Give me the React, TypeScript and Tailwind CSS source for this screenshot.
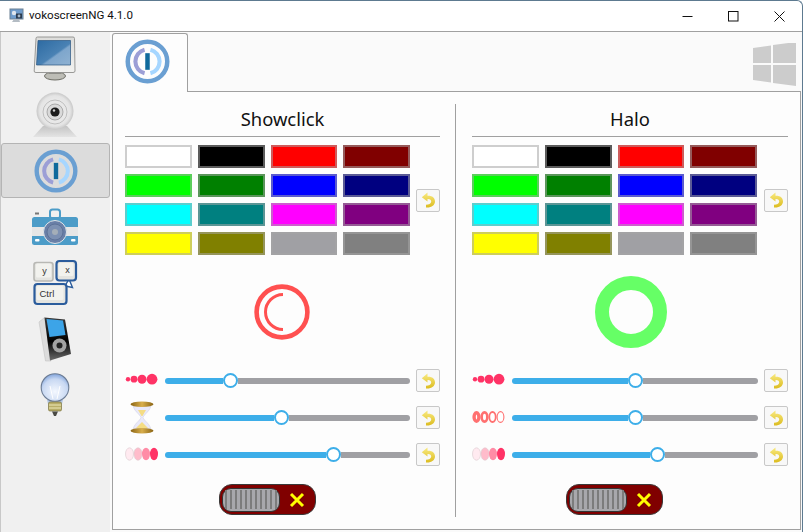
const FONT = "font-['Noto_Sans','Open_Sans',sans-serif]";

const swatches = [
  "bg-[#ffffff]", "bg-[#000000]", "bg-[#ff0000]", "bg-[#800000]",
  "bg-[#00ff00]", "bg-[#008000]", "bg-[#0000ff]", "bg-[#000080]",
  "bg-[#00ffff]", "bg-[#008080]", "bg-[#ff00ff]", "bg-[#800080]",
  "bg-[#ffff00]", "bg-[#808000]", "bg-[#a0a0a4]", "bg-[#808080]",
];

function Logo({ size }: { size: number }) {
  return (
    <svg width={size} height={size} viewBox="0 0 46 46">
      <circle cx="23" cy="23" r="20.2" fill="none" stroke="#6a9fd2" strokeWidth="4.6" />
      <path d="M20 10.9 A12.5 12.5 0 0 0 20 35.1" fill="none" stroke="#9c9fd6" strokeWidth="4.2" />
      <path d="M26 10.9 A12.5 12.5 0 0 1 26 35.1" fill="none" stroke="#a6d6ff" strokeWidth="4.2" />
      <rect x="20.7" y="14.5" width="4.6" height="17" fill="#0f6a9c" />
    </svg>
  );
}

function SideIcon({ i }: { i: number }) {
  return (
    <svg width="108" height="55" viewBox="1 0 108 55">
      <defs>
        <linearGradient id={`scr${i}`} x1="0" y1="0" x2="1" y2="1">
          <stop offset="0" stopColor="#2c6aa2" />
          <stop offset="0.55" stopColor="#4a82b4" />
          <stop offset="0.6" stopColor="#7ea6cc" />
          <stop offset="1" stopColor="#8fb2d2" />
        </linearGradient>
        <linearGradient id={`bez${i}`} x1="0" y1="0" x2="0" y2="1">
          <stop offset="0" stopColor="#dcdcda" />
          <stop offset="1" stopColor="#f2f2f0" />
        </linearGradient>
        <radialGradient id={`sph${i}`} cx="0.5" cy="0.5" r="0.55">
          <stop offset="0" stopColor="#f6f6f6" />
          <stop offset="0.75" stopColor="#e4e4e4" />
          <stop offset="1" stopColor="#b8b8b8" />
        </radialGradient>
        <linearGradient id={`base${i}`} x1="0" y1="0" x2="0" y2="1">
          <stop offset="0" stopColor="#c4c4c4" />
          <stop offset="1" stopColor="#e4e4e4" />
        </linearGradient>
        <linearGradient id={`pl${i}`} x1="0" y1="0" x2="0" y2="1">
          <stop offset="0" stopColor="#3a3a3a" />
          <stop offset="0.55" stopColor="#000" />
          <stop offset="1" stopColor="#6a6a6a" />
        </linearGradient>
        <radialGradient id={`bl${i}`} cx="0.5" cy="0.65" r="0.65">
          <stop offset="0" stopColor="#f4f8ff" />
          <stop offset="0.7" stopColor="#c8d8f2" />
          <stop offset="1" stopColor="#7fa2da" />
        </radialGradient>
      </defs>
      {i === 0 && (
        <g>
          <ellipse cx="55" cy="43" rx="10.5" ry="4" fill="#bdbdb6" stroke="#6c6c64" />
          <rect x="49" y="37" width="12" height="4" fill="#8d8d88" />
          <path d="M37.5 4 L73 4 Q74.5 4 74.5 5.5 L75 38 Q75 39.5 73 39.5 L36 39.5 Q34 39.5 34.2 38 L36 5.5 Q36 4 37.5 4 Z" fill={`url(#bez${i})`} stroke="#8e8e8c" strokeWidth="0.9" />
          <path d="M38 7.5 L70.5 7.5 L70.5 32 L36.5 32 Z" fill={`url(#scr${i})`} stroke="#2a5580" strokeWidth="0.7" />
        </g>
      )}
      {i === 1 && (
        <g>
          <path d="M43 38 L67 38 L77 49 L33 49 Z" fill={`url(#base${i})`} />
          <circle cx="55" cy="23" r="18.5" fill={`url(#sph${i})`} />
          <circle cx="55" cy="24" r="12" fill="#e8e8e8" stroke="#b4b4b4" strokeWidth="0.8" />
          <circle cx="55" cy="24" r="8" fill="#dadada" stroke="#9c9c9c" strokeWidth="0.8" />
          <circle cx="55" cy="24" r="4.6" fill="#1c1c1c" />
          <circle cx="54" cy="22.5" r="1.2" fill="#cfcfcf" />
        </g>
      )}
      {i === 3 && (
        <g>
          <rect x="50" y="11.5" width="10" height="9" rx="2.5" fill="none" stroke="#4c9cc8" strokeWidth="2" />
          <rect x="32" y="19" width="46" height="28" rx="2.5" fill="#4c9cc8" />
          <rect x="32" y="29" width="46" height="9" fill="#e6e6e6" />
          <rect x="35" y="14.5" width="4" height="2" fill="#777" />
          <circle cx="55" cy="34" r="11.5" fill="#6a80a8" stroke="#dfe6ea" strokeWidth="1" />
          <circle cx="55" cy="34" r="8" fill="#7c90b2" stroke="#5d7298" />
          <circle cx="55" cy="34" r="3" fill="#a4aeb8" />
          <rect x="35" y="41" width="4.5" height="2.4" rx="1" fill="#fff" />
          <rect x="71" y="41" width="4.5" height="2.4" rx="1" fill="#fff" />
        </g>
      )}
      {i === 4 && (
        <g fontFamily="Liberation Sans, sans-serif" fontSize="9" fill="#333">
          <rect x="34" y="9.5" width="19" height="18.5" rx="2.5" fill="#e4e4e0" stroke="#b8b8b4" strokeWidth="1.6" />
          <rect x="36" y="10.5" width="15" height="14" rx="1.5" fill="#f2f2ee" />
          <text x="44.5" y="21" textAnchor="middle">y</text>
          <path d="M69 26 L72.5 34.5 L65 33 Z" fill="#fff" stroke="#2b5c9c" strokeWidth="1.4" />
          <rect x="56.5" y="8" width="19.5" height="19.5" rx="3" fill="#e4e4e0" stroke="#2b5c9c" strokeWidth="2.2" />
          <rect x="58.5" y="10" width="15" height="13" rx="1.5" fill="#f2f2ee" />
          <text x="67.5" y="20" textAnchor="middle">x</text>
          <rect x="34.5" y="31" width="32" height="20" rx="3" fill="#e4e4e0" stroke="#2b5c9c" strokeWidth="2.2" />
          <rect x="36.5" y="33" width="27" height="14" rx="1.5" fill="#f2f2ee" />
          <text x="39.5" y="44" fontSize="9.5">Ctrl</text>
        </g>
      )}
      {i === 5 && (
        <g>
          <path d="M39 14 L44.5 9.5 L51 53 L45.5 53 Z" fill="#dcdcdc" stroke="#bdbdbd" strokeWidth="0.5" />
          <path d="M44.5 9.5 L65 11.5 L71 46 L50 52.5 Z" fill={`url(#pl${i})`} />
          <path d="M46.5 11 L63 12.5 L65.5 27 L49.5 29 Z" fill="#3ca4e8" />
          <circle cx="59.5" cy="37.5" r="7" fill="#a2a2a2" />
          <circle cx="59.5" cy="37.5" r="3" fill="#222" />
        </g>
      )}
      {i === 6 && (
        <g>
          <path d="M47 37 L63 37 L62 41 L48 41 Z" fill="#b4c8e4" />
          <circle cx="55" cy="24.5" r="13.8" fill={`url(#bl${i})`} stroke="#6c7c94" strokeWidth="1.1" />
          <path d="M50 23 L53 36 M60 23 L57 36" stroke="#fff" strokeWidth="1" fill="none" />
          <rect x="48.5" y="39" width="13" height="9" rx="1.5" fill="#b8ae68" stroke="#7c7440" strokeWidth="0.7" />
          <path d="M49 42 L61 42 M49 45 L61 45" stroke="#efe9b8" strokeWidth="1" />
          <path d="M52 48.5 L58 48.5 L56 53 L54 53 Z" fill="#4a4a44" />
        </g>
      )}
    </svg>
  );
}

function ResetButton() {
  return (
    <button className="w-6 h-[23px] shrink-0 flex items-center justify-center border border-[#c8c8c8] rounded-[2px] bg-[#f8f8f8]">
      <svg width="15" height="16" viewBox="0 0 15 16">
        <defs>
          <linearGradient id="undo" x1="0" y1="0" x2="0" y2="1">
            <stop offset="0" stopColor="#f9ea80" />
            <stop offset="1" stopColor="#dcbc20" />
          </linearGradient>
        </defs>
        <path
          d="M6.5 0.5 L0.8 5.2 L6.5 9.5 L6.5 7 C9 6.8 10.4 8 10.2 9.8 C10 11.8 7.8 12.8 5 12.8 L5 15.4 C10.4 15.8 14 13 14 9.4 C14 5.6 10.6 3.4 6.5 3.8 Z"
          fill="url(#undo)"
        />
      </svg>
    </button>
  );
}

function Slider({ fill, icon }: { fill: string; icon: React.ReactNode }) {
  return (
    <div className="flex items-center h-[25px]">
      <div className="w-[33px] h-[25px] shrink-0 flex items-center justify-center">{icon}</div>
      <div className="flex-1 flex items-center ml-[7px] mr-[6px]">
        <div className={`${fill} h-1.5 rounded-l-[3px] bg-[#3daee9]`} />
        <div className="size-[15px] shrink-0 rounded-full bg-white border-2 border-[#3daee9]" />
        <div className="flex-1 h-1.5 rounded-r-[3px] bg-[#a0a0a4]" />
      </div>
      <ResetButton />
    </div>
  );
}

const SizeDots = () => (
  <svg width="33" height="25" viewBox="0 0 33 25" fill="#ff3366">
    <circle cx="3" cy="11.2" r="2.2" />
    <circle cx="9" cy="11.2" r="3.4" />
    <circle cx="17" cy="11.2" r="4.5" />
    <circle cx="27" cy="11.2" r="5.4" />
  </svg>
);

const OpacityDots = () => (
  <svg width="33" height="25" viewBox="0 0 33 25">
    <ellipse cx="4.5" cy="12" rx="4" ry="6.2" fill="#ffeaf0" stroke="#e0d0d4" strokeWidth="0.7" />
    <ellipse cx="13" cy="12" rx="4" ry="6.2" fill="#ffbccb" stroke="#e0c8ce" strokeWidth="0.7" />
    <ellipse cx="21" cy="12" rx="4" ry="6.2" fill="#ff8ca6" />
    <ellipse cx="29" cy="12" rx="4" ry="6.2" fill="#ff3366" />
  </svg>
);

const RingDots = () => (
  <svg width="33" height="25" viewBox="0 0 33 25" fill="#fff" stroke="#ff7070">
    <ellipse cx="4.5" cy="12" rx="2.4" ry="4.2" strokeWidth="3.4" />
    <ellipse cx="12.5" cy="12" rx="2.8" ry="4.6" strokeWidth="2.6" />
    <ellipse cx="20.5" cy="12" rx="3.2" ry="5" strokeWidth="1.8" />
    <ellipse cx="28.5" cy="12" rx="3.4" ry="5.4" strokeWidth="1.1" />
  </svg>
);

const Hourglass = () => (
  <svg width="24" height="33" viewBox="0 0 24 33" className="shrink-0">
    <defs>
      <linearGradient id="cap" x1="0" y1="0" x2="1" y2="0">
        <stop offset="0" stopColor="#8a6414" />
        <stop offset="0.5" stopColor="#d8ae4c" />
        <stop offset="1" stopColor="#8a6414" />
      </linearGradient>
    </defs>
    <path d="M3 3 L21 3 C21 10 14 13 13 16.5 C14 20 21 23 21 30 L3 30 C3 23 10 20 11 16.5 C10 13 3 10 3 3 Z" fill="#e9e9fa" stroke="#c8c8dc" strokeWidth="0.5" />
    <path d="M8 9 L16 9 L12.5 15 L11.5 15 Z" fill="#f4dc84" />
    <path d="M12 21 L18 27 L6 27 Z" fill="#f4dc84" />
    <ellipse cx="12" cy="3.2" rx="11.5" ry="2.8" fill="url(#cap)" />
    <ellipse cx="12" cy="29.8" rx="11.5" ry="2.8" fill="url(#cap)" />
  </svg>
);

function Toggle() {
  return (
    <div className="w-[97px] h-[31px] rounded-[13px] bg-[#800000] border border-[#3a3a3a] flex items-center pl-[2px]">
      <div className="w-[58px] h-[24px] rounded-[9px] bg-[#a8a8ac] border border-[#333] flex items-center justify-center gap-[2.5px] shrink-0">
        {[0, 1, 2, 3, 4, 5, 6, 7, 8, 9, 10].map((k) => (
          <div key={k} className="w-[2.5px] h-[19px] bg-[#7c7c7c]" />
        ))}
      </div>
      <svg width="16" height="16" viewBox="0 0 16 16" className="ml-[9px]">
        <path d="M2 2 L14 14 M14 2 L2 14" stroke="#ffff00" strokeWidth="3" />
      </svg>
    </div>
  );
}

function Panel({
  title,
  circle,
  sliders,
  className,
  toggleClass,
}: {
  title: string;
  circle: React.ReactNode;
  sliders: React.ReactNode;
  className: string;
  toggleClass: string;
}) {
  return (
    <div className={`${className} flex flex-col`}>
      <div className="h-[45px] border-b border-[#a0a0a0] flex items-center justify-center pt-[9px] text-[18.4px] text-[#111]">
        {title}
      </div>
      <div className="flex items-center mt-2">
        <div className="grid grid-cols-[67px_67px_66px_67px] auto-rows-[23px] gap-x-[6px] gap-y-[6px]">
          {swatches.map((s) => (
            <div key={s} className={`${s} border-2 border-[#a5a5a58c]`} />
          ))}
        </div>
        <div className="ml-auto">
          <ResetButton />
        </div>
      </div>
      <div className="h-[113px] flex items-center justify-center">{circle}</div>
      <div className="flex flex-col gap-3">{sliders}</div>
      <div className={`mt-[17px] ${toggleClass}`}>
        <Toggle />
      </div>
    </div>
  );
}

export default function App() {
  return (
    <div className={`${FONT} w-[803px] h-[532px] flex flex-col bg-white overflow-hidden border-t border-r border-[#5d7a90] rounded-tr-md`}>
      <div className="h-[30px] flex items-center shrink-0 pl-[9px]">
        <svg width="15" height="16" viewBox="0 0 15 16" className="shrink-0">
          <rect x="1" y="1" width="13" height="10" fill="#6f9ccc" stroke="#6a8094" />
          <circle cx="5" cy="5" r="2.2" fill="#dfe6ee" />
          <rect x="7" y="5.5" width="6" height="5" fill="#2c3c50" />
          <circle cx="10" cy="8" r="1.4" fill="#a8b8c8" />
          <path d="M5 11 L10 11 L11 14 L3 14 Z" fill="#b4bcc4" />
        </svg>
        <span className="ml-[5px] text-[11.6px] text-[#111] font-['Roboto',sans-serif]">vokoscreenNG 4.1.0</span>
        <div className="ml-auto flex">
          <div className="w-[46px] h-[30px] flex items-center justify-center">
            <svg width="11" height="11" viewBox="0 0 11 11"><path d="M0.5 5.5 H10.5" stroke="#111" /></svg>
          </div>
          <div className="w-[46px] h-[30px] flex items-center justify-center">
            <svg width="11" height="11" viewBox="0 0 11 11"><rect x="0.5" y="0.5" width="9.5" height="9.5" fill="none" stroke="#111" /></svg>
          </div>
          <div className="w-[46px] h-[30px] flex items-center justify-center">
            <svg width="11" height="11" viewBox="0 0 11 11"><path d="M0.5 0.5 L10.5 10.5 M10.5 0.5 L0.5 10.5" stroke="#111" /></svg>
          </div>
        </div>
      </div>
      <div className="flex-1 flex border-t border-[#a0a0a0] min-h-0">
        <div className="w-[110px] shrink-0 bg-[#f0f0f0] border-l border-[#c8c8c8] pt-px flex flex-col">
          {[0, 1, 2, 3, 4, 5, 6].map((i) =>
            i === 2 ? (
              <div key={i} className="h-[55px] w-[109px] bg-[#dcdcdc] border border-[#b4b4b4] rounded-[3px] flex items-center justify-center">
                <Logo size={44} />
              </div>
            ) : (
              <div key={i} className="h-[55px] w-[109px]">
                <SideIcon i={i} />
              </div>
            ),
          )}
        </div>
        <div className="flex-1 bg-[#fafafa] pl-[2px] pt-px pr-[1px] pb-[2px] flex flex-col min-w-0">
          <div className="flex h-[59px] shrink-0">
            <div className="w-[76px] bg-[#fdfdfd] border-x border-t border-[#a0a0a0] rounded-t-[3px] pt-[5px] pl-[12px]">
              <Logo size={45} />
            </div>
            <div className="flex-1 border-b border-[#a0a0a0] flex justify-end pr-[4px] pt-[10px]">
              <svg width="44" height="44" viewBox="0 0 44 44" fill="#cccccc">
                <path d="M0 5 L18 2.5 V20 H0 Z" />
                <path d="M20 2 L43 -1 V20 H20 Z" />
                <path d="M0 22 H18 V39.5 L0 37 Z" />
                <path d="M20 22 H43 V43 L20 40 Z" />
              </svg>
            </div>
          </div>
          <div className="flex-1 flex bg-[#fdfdfd] border-x border-b border-[#a0a0a0] min-h-0">
            <Panel
              title="Showclick"
              className="w-[342px] pl-3 pr-[15px]"
              toggleClass="ml-[94px]"
              circle={
                <svg width="56" height="56" viewBox="0 0 56 56" className="-translate-x-px">
                  <circle cx="28" cy="28" r="25.4" fill="none" stroke="#ff5050" strokeWidth="4.6" />
                  <path d="M29 10.5 A17.5 17.5 0 0 0 29 45.5" fill="none" stroke="#ff5050" strokeWidth="3" />
                </svg>
              }
              sliders={
                <>
                  <Slider fill="w-[58px]" icon={<SizeDots />} />
                  <Slider fill="w-[109px]" icon={<Hourglass />} />
                  <Slider fill="w-[161px]" icon={<OpacityDots />} />
                </>
              }
            />
            <div className="w-px bg-[#a0a0a0] my-3 shrink-0" />
            <Panel
              title="Halo"
              className="flex-1 pl-4 pr-[12px]"
              toggleClass="ml-[94px]"
              circle={
                <svg width="72" height="72" viewBox="0 0 72 72" className="translate-x-px">
                  <circle cx="36" cy="36" r="29" fill="none" stroke="#66ff66" strokeWidth="14" />
                </svg>
              }
              sliders={
                <>
                  <Slider fill="w-[116px]" icon={<SizeDots />} />
                  <Slider fill="w-[116px]" icon={<RingDots />} />
                  <Slider fill="w-[138px]" icon={<OpacityDots />} />
                </>
              }
            />
          </div>
        </div>
      </div>
    </div>
  );
}
